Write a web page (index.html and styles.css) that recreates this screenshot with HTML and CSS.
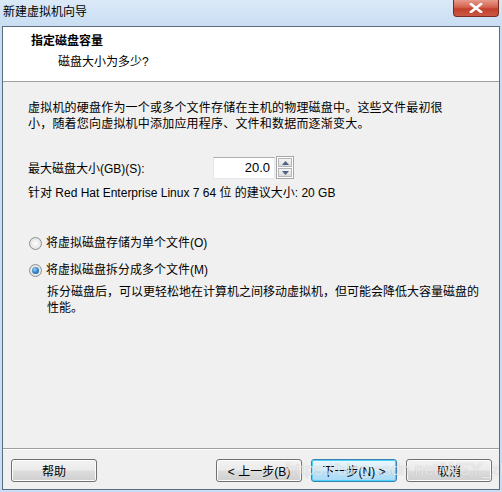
FILE: index.html
```html
<!DOCTYPE html>
<html lang="zh-CN">
<head>
  <meta charset="UTF-8">
  <title>新建虚拟机向导</title>
  <link rel="stylesheet" href="styles.css">
</head>
<body>
  <div class="window">
    <div class="titlebar">
      <span class="title">新建虚拟机向导</span>
      <button class="close" type="button" aria-label="关闭">
        <svg width="14" height="10" viewBox="0 0 14 10">
          <path d="M2 1 L12 9 M12 1 L2 9" stroke="#ffffff" stroke-width="2.6" stroke-linecap="square"/>
        </svg>
      </button>
    </div>

    <div class="client">
      <div class="header">
        <div class="heading">指定磁盘容量</div>
        <div class="subheading">磁盘大小为多少?</div>
      </div>

      <div class="content">
        <p class="intro">虚拟机的硬盘作为一个或多个文件存储在主机的物理磁盘中。这些文件最初很小，随着您向虚拟机中添加应用程序、文件和数据而逐渐变大。</p>

        <div class="size-row">
          <label for="disk-size">最大磁盘大小(GB)(S):</label>
          <div class="spinner">
            <input id="disk-size" type="text" value="20.0">
            <div class="spin-buttons">
              <span class="spin up">
                <svg width="7" height="4" viewBox="0 0 7 4"><path d="M0 4 L3.5 0 L7 4 Z" fill="#4d6185"/></svg>
              </span>
              <span class="spin down">
                <svg width="7" height="4" viewBox="0 0 7 4"><path d="M0 0 L3.5 4 L7 0 Z" fill="#4d6185"/></svg>
              </span>
            </div>
          </div>
        </div>

        <p class="hint">针对 Red Hat Enterprise Linux 7 64 位 的建议大小: 20 GB</p>

        <div class="options">
          <label class="radio">
            <input type="radio" name="split">
            <span class="dot"></span>
            将虚拟磁盘存储为单个文件(O)
          </label>
          <label class="radio">
            <input type="radio" name="split" checked>
            <span class="dot"></span>
            将虚拟磁盘拆分成多个文件(M)
          </label>
          <p class="option-note">拆分磁盘后，可以更轻松地在计算机之间移动虚拟机，但可能会降低大容量磁盘的性能。</p>
        </div>
      </div>

      <div class="footer">
        <button class="btn" type="button">帮助</button>
        <div class="nav-buttons">
          <button class="btn" type="button">&lt; 上一步(B)</button>
          <button class="btn default" type="button">下一步(N) &gt;</button>
          <button class="btn" type="button">取消</button>
        </div>
        <span class="watermark">https://blog.csdn.net/WSY_zh</span>
      </div>
    </div>
  </div>
</body>
</html>
```

FILE: styles.css
```css
* {
  box-sizing: border-box;
}

body {
  margin: 0;
  font-family: Tahoma, "Liberation Sans", "Noto Sans CJK SC", sans-serif;
  font-size: 12px;
  color: #000;
  background: #ffffff;
}

.window {
  width: 502px;
  height: 492px;
  display: flex;
  flex-direction: column;
  background: linear-gradient(to bottom, #dbe9f7 0px, #c9def3 26px, #c9def3 100%);
}

/* title bar */
.titlebar {
  height: 26px;
  display: flex;
  align-items: flex-start;
  padding-left: 3px;
}

.title {
  line-height: 24px;
  font-size: 12px;
}

.close {
  margin-left: auto;
  margin-right: 3px;
  width: 46px;
  height: 17px;
  padding: 0;
  border: 1px solid #7a2a23;
  border-top: none;
  border-radius: 0 0 4px 4px;
  background: linear-gradient(to bottom, #e59a8c 0%, #d4634f 45%, #c2402c 55%, #c95a44 100%);
  display: flex;
  align-items: center;
  justify-content: center;
}

/* client area */
.client {
  flex: 1;
  margin: 0 2px 2px 2px;
  border: 1px solid #5b6b80;
  background: #f0f0f0;
  display: flex;
  flex-direction: column;
}

.header {
  height: 55px;
  background: #ffffff;
  border-bottom: 1px solid #a0a0a0;
  padding: 6px 0 0 28px;
}

.heading {
  font-weight: bold;
  line-height: 16px;
  margin-bottom: 5px;
}

.subheading {
  line-height: 16px;
  padding-left: 27px;
}

.content {
  flex: 1;
  padding: 18px 14px 0 25px;
}

.intro {
  margin: 0;
  max-width: 426px;
  line-height: 16px;
  letter-spacing: 0.2px;
}

.size-row {
  margin-top: 24px;
  display: flex;
  align-items: center;
}

.size-row label {
  width: 185px;
}

.spinner {
  display: flex;
  align-items: center;
  gap: 1px;
}

.spinner input {
  width: 62px;
  height: 22px;
  border: 1px solid #e3e9ef;
  border-top-color: #abadb3;
  background: #ffffff;
  text-align: right;
  padding: 0 4px 0 0;
  font: inherit;
  font-size: 13px;
}

.spin-buttons {
  display: flex;
  flex-direction: column;
  gap: 1px;
  border: 1px solid #a7a7a7;
  padding: 1px;
  background: #ffffff;
}

.spin {
  width: 14px;
  height: 9px;
  border: 1px solid #b5b5b5;
  background: linear-gradient(to bottom, #f5f5f5, #dcdcdc);
  display: flex;
  align-items: center;
  justify-content: center;
}

.hint {
  margin: 6px 0 0 0;
  line-height: 16px;
}

.options {
  margin-top: 34px;
}

.radio {
  display: flex;
  align-items: center;
  gap: 4px;
  line-height: 16px;
  margin-bottom: 11px;
  padding-left: 1px;
}

.radio input {
  display: none;
}

.dot {
  width: 13px;
  height: 13px;
  border-radius: 50%;
  border: 1px solid #8e8f8f;
  background: radial-gradient(circle at 50% 50%, #ffffff 0%, #e6e6e6 60%, #d0d0d0 100%);
  position: relative;
}

.radio input:checked + .dot::after {
  content: "";
  position: absolute;
  left: 2px;
  top: 2px;
  width: 7px;
  height: 7px;
  border-radius: 50%;
  background: radial-gradient(circle at 40% 35%, #9ad1f5 0%, #2f7bc2 55%, #1b4f8a 100%);
}

.option-note {
  margin: -5px 0 0 19px;
  line-height: 16px;
}

/* footer with wizard buttons */
.footer {
  position: relative;
  height: 41px;
  border-top: 1px solid #a0a0a0;
  box-shadow: inset 0 1px 0 #ffffff;
  display: flex;
  align-items: flex-start;
  padding: 10px 7px 0 8px;
}

.nav-buttons {
  margin-left: auto;
  display: flex;
  gap: 9px;
}

.btn {
  width: 86px;
  height: 23px;
  border: 1px solid #707070;
  border-radius: 3px;
  background: linear-gradient(to bottom, #f2f2f2 0%, #ebebeb 48%, #dddddd 52%, #cfcfcf 100%);
  font: inherit;
  font-size: 12px;
  color: #000;
  padding: 0;
  box-shadow: inset 0 0 0 1px #fcfcfc;
}

.btn.default {
  border-color: #3c7fb1;
  box-shadow: inset 0 0 0 1px #48d4fb;
  background: linear-gradient(to bottom, #eaf6fd 0%, #d9f0fc 48%, #bee6fd 52%, #a7d9f5 100%);
}

.watermark {
  position: absolute;
  left: 283px;
  top: 10px;
  font-family: "Liberation Sans", sans-serif;
  font-size: 17px;
  line-height: 22px;
  color: rgba(255, 255, 255, 0.7);
  text-shadow: 0 0 1px rgba(110, 110, 110, 0.45);
  pointer-events: none;
}
```
